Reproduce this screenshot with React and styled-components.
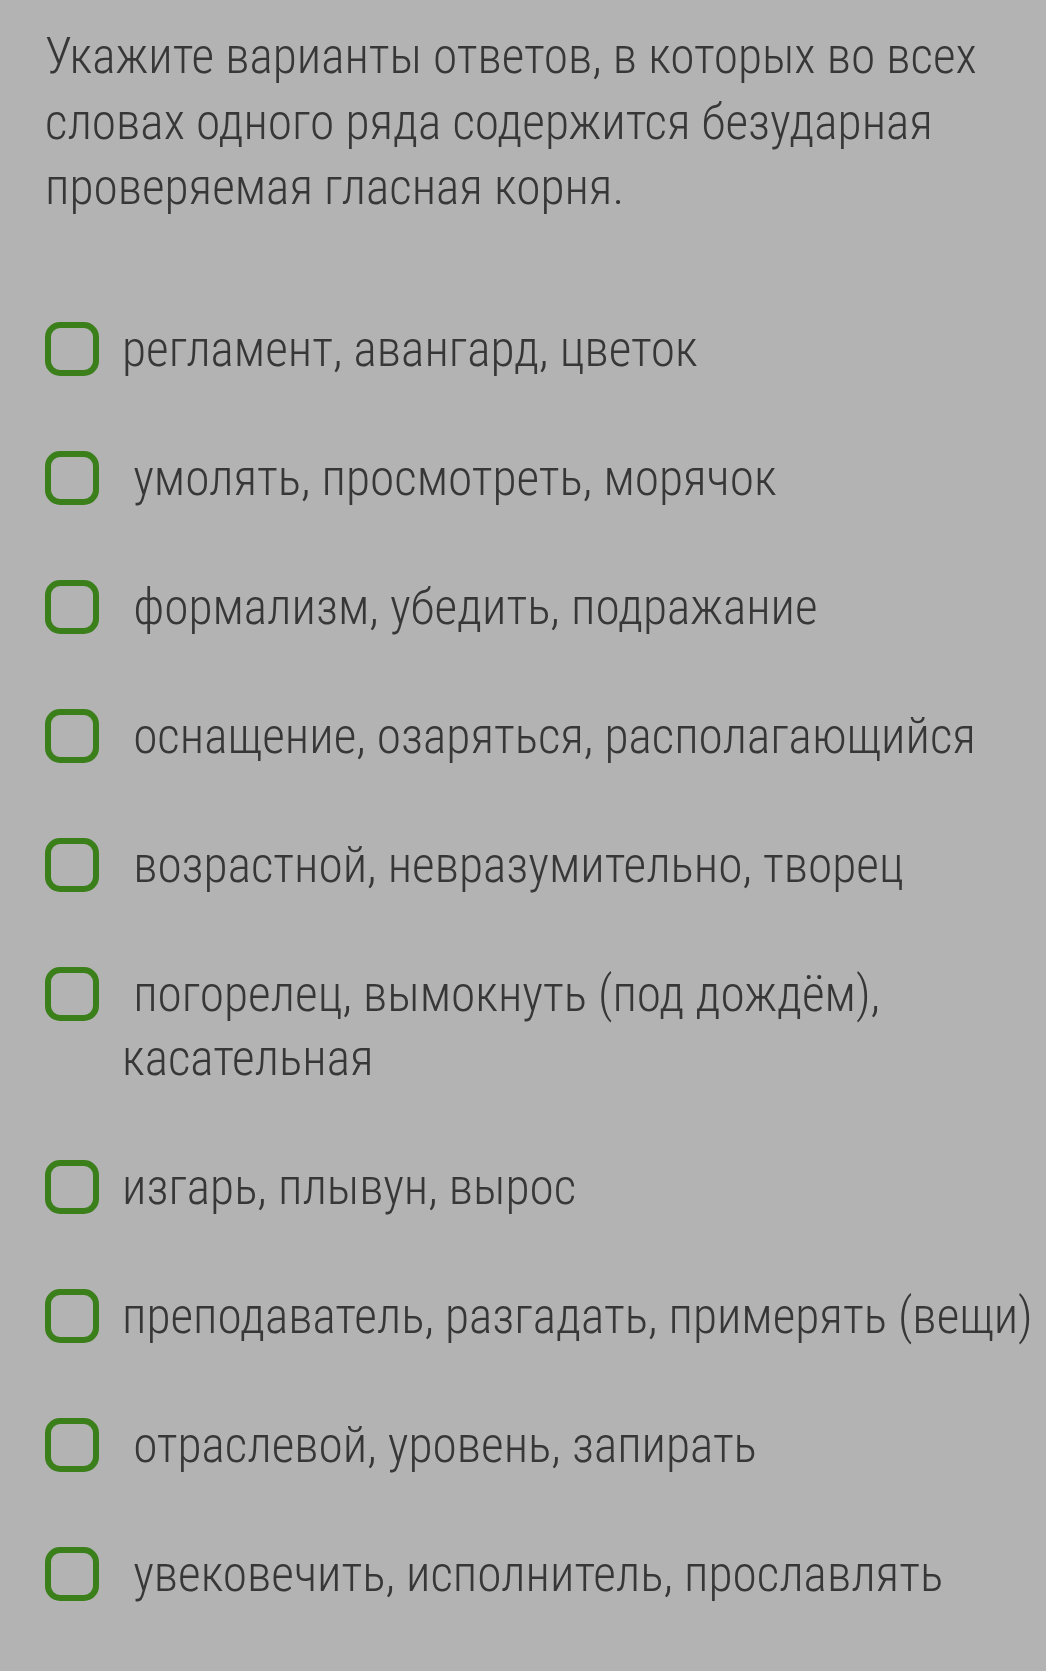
import React from 'react'
import styled, { createGlobalStyle } from 'styled-components'

const GlobalStyle = createGlobalStyle`
  html, body {
    margin: 0;
    padding: 0;
    background: #b3b3b3;
  }
`

const Page = styled.div`
  min-height: 1671px;
  box-sizing: border-box;
  padding: 24px 0 60px 45px;
  background: #b3b3b3;
  font-family: "Roboto Condensed", "Liberation Sans Narrow", Roboto, sans-serif;
  font-weight: 300;
  color: #373737;
`

const Question = styled.p`
  margin: 0;
  max-width: 960px;
  font-size: 49.4px;
  line-height: 65.5px;
`

const Options = styled.ul`
  list-style: none;
  margin: 96px 0 0;
  padding: 0;
  display: flex;
  flex-direction: column;
  gap: 65px;
`

const Option = styled.li`
  display: flex;
  align-items: flex-start;
  gap: 23px;
`

const Box = styled.span`
  flex: none;
  box-sizing: border-box;
  width: 54px;
  height: 54px;
  margin-top: 5px;
  border: 6px solid #3b7f1b;
  border-radius: 15px;
`

const Label = styled.span`
  font-size: 49.4px;
  line-height: 64px;
  white-space: pre-wrap;
`

const options = [
  'регламент, авангард, цветок',
  ' умолять, просмотреть, морячок',
  ' формализм, убедить, подражание',
  ' оснащение, озаряться, располагающийся',
  ' возрастной, невразумительно, творец',
  ' погорелец, вымокнуть (под дождём), касательная',
  'изгарь, плывун, вырос',
  'преподаватель, разгадать, примерять (вещи)',
  ' отраслевой, уровень, запирать',
  ' увековечить, исполнитель, прославлять',
]

const App = () => {
  return (
    <Page>
      <GlobalStyle />
      <Question>
        Укажите варианты ответов, в которых во всех словах одного ряда содержится безударная проверяемая гласная корня.
      </Question>
      <Options>
        {options.map((text, i) => (
          <Option key={i}>
            <Box />
            <Label>{text}</Label>
          </Option>
        ))}
      </Options>
    </Page>
  )
}

export default App
